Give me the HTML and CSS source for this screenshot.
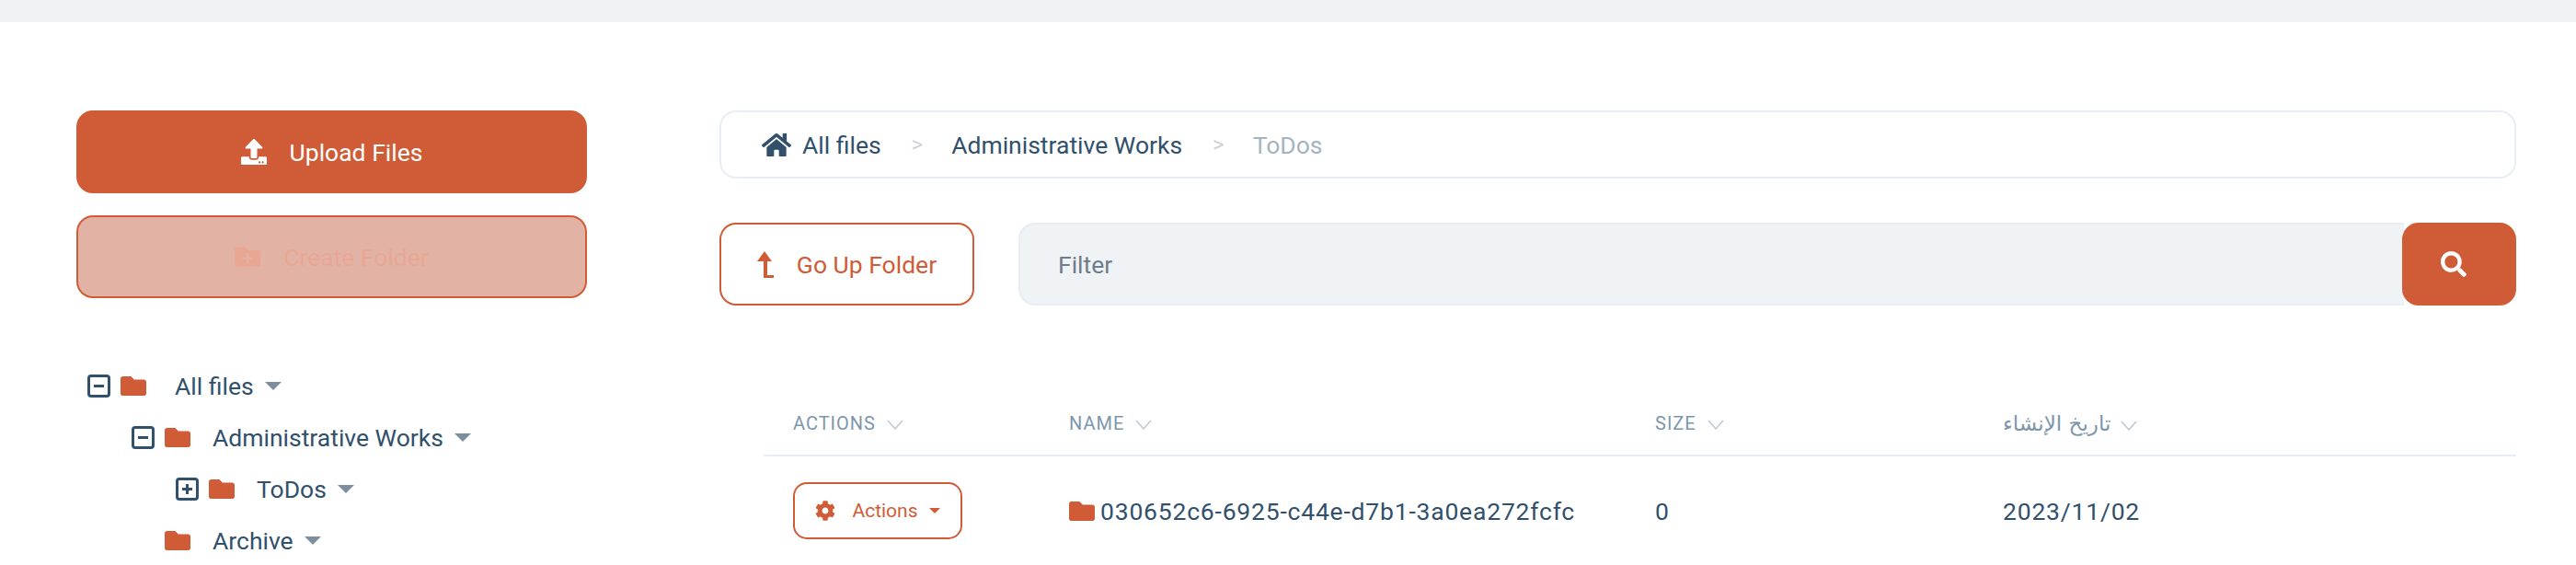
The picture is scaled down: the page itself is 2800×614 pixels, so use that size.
FILE: index.html
```html
<!DOCTYPE html>
<html lang="en">
<head>
  <meta charset="UTF-8" />
  <title>Files</title>
  <link rel="stylesheet" href="styles.css">
</head>
<body>

  <div class="top-bar"></div>

  <div class="page">

    <aside class="sidebar">
      <button class="btn btn-primary btn-block">
        <svg class="icon-upload" viewBox="0 0 512 512"><path d="M296 384h-80c-13.3 0-24-10.7-24-24V192h-87.7c-17.8 0-26.7-21.5-14.1-34.1L242.3 5.7c7.5-7.5 19.8-7.5 27.3 0l152.2 152.2c12.6 12.6 3.7 34.1-14.1 34.1H320v168c0 13.3-10.7 24-24 24zm216-8v112c0 13.3-10.7 24-24 24H24c-13.3 0-24-10.7-24-24V376c0-13.3 10.7-24 24-24h136v8c0 30.9 25.1 56 56 56h80c30.9 0 56-25.1 56-56v-8h136c13.3 0 24 10.7 24 24zm-124 88c0-11-9-20-20-20s-20 9-20 20 9 20 20 20 20-9 20-20zm64 0c0-11-9-20-20-20s-20 9-20 20 9 20 20 20 20-9 20-20z"/></svg>
        Upload Files
      </button>
      <button class="btn btn-disabled btn-block">
        <svg class="icon-upload" viewBox="0 0 512 512"><path d="M464,128H272L208,64H48A48,48,0,0,0,0,112V400a48,48,0,0,0,48,48H464a48,48,0,0,0,48-48V176A48,48,0,0,0,464,128ZM359.5,296a16,16,0,0,1-16,16h-64v64a16,16,0,0,1-16,16h-16a16,16,0,0,1-16-16V312h-64a16,16,0,0,1-16-16V280a16,16,0,0,1,16-16h64V200a16,16,0,0,1,16-16h16a16,16,0,0,1,16,16v64h64a16,16,0,0,1,16,16Z"/></svg>
        Create Folder
      </button>

      <ul class="tree">
        <li>
          <div class="tree-row tree-root">
            <svg class="toggle" viewBox="0 0 25 25"><rect x="1.5" y="1.5" width="22" height="22" rx="2.5"/><path d="M7 12.5h11"/></svg>
            <svg class="folder" viewBox="0 0 512 384"><path d="M464 64H272L208 0H48C21.49 0 0 21.49 0 48v288c0 26.51 21.49 48 48 48h416c26.51 0 48-21.49 48-48V112c0-26.51-21.49-48-48-48z"/></svg>
            <span>All files</span>
            <i class="caret"></i>
          </div>
          <ul>
            <li>
              <div class="tree-row">
                <svg class="toggle" viewBox="0 0 25 25"><rect x="1.5" y="1.5" width="22" height="22" rx="2.5"/><path d="M7 12.5h11"/></svg>
                <svg class="folder" viewBox="0 0 512 384"><path d="M464 64H272L208 0H48C21.49 0 0 21.49 0 48v288c0 26.51 21.49 48 48 48h416c26.51 0 48-21.49 48-48V112c0-26.51-21.49-48-48-48z"/></svg>
                <span>Administrative Works</span>
                <i class="caret"></i>
              </div>
              <ul>
                <li>
                  <div class="tree-row">
                    <svg class="toggle" viewBox="0 0 25 25"><rect x="1.5" y="1.5" width="22" height="22" rx="2.5"/><path d="M7 12.5h11M12.5 7v11"/></svg>
                    <svg class="folder" viewBox="0 0 512 384"><path d="M464 64H272L208 0H48C21.49 0 0 21.49 0 48v288c0 26.51 21.49 48 48 48h416c26.51 0 48-21.49 48-48V112c0-26.51-21.49-48-48-48z"/></svg>
                    <span>ToDos</span>
                    <i class="caret"></i>
                  </div>
                </li>
              </ul>
            </li>
            <li>
              <div class="tree-row">
                <span class="toggle-space"></span>
                <svg class="folder" viewBox="0 0 512 384"><path d="M464 64H272L208 0H48C21.49 0 0 21.49 0 48v288c0 26.51 21.49 48 48 48h416c26.51 0 48-21.49 48-48V112c0-26.51-21.49-48-48-48z"/></svg>
                <span>Archive</span>
                <i class="caret"></i>
              </div>
            </li>
          </ul>
        </li>
      </ul>
    </aside>

    <main class="content">
      <nav class="breadcrumb">
        <svg class="icon-home" viewBox="0 32 576 448"><path d="M280.37 148.26L96 300.11V464a16 16 0 0 0 16 16l112.06-.29a16 16 0 0 0 15.92-16V368a16 16 0 0 1 16-16h64a16 16 0 0 1 16 16v95.64a16 16 0 0 0 16 16.05L464 480a16 16 0 0 0 16-16V300L295.67 148.26a12.19 12.19 0 0 0-15.3 0zM571.6 251.47L488 182.56V44.05a12 12 0 0 0-12-12h-56a12 12 0 0 0-12 12v72.61L318.47 43a48 48 0 0 0-61 0L4.34 251.47a12 12 0 0 0-1.6 16.9l25.5 31A12 12 0 0 0 45.15 301l235.22-193.74a12.19 12.19 0 0 1 15.3 0L530.9 301a12 12 0 0 0 16.9-1.6l25.5-31a12 12 0 0 0-1.7-16.93z"/></svg>
        <span>All files</span>
        <span class="crumb-sep">&gt;</span>
        <span>Administrative Works</span>
        <span class="crumb-sep">&gt;</span>
        <span class="crumb-current">ToDos</span>
      </nav>

      <div class="toolbar">
        <button class="btn btn-outline btn-up">
          <svg class="icon-up" viewBox="0 0 18 29"><path d="M8 0l8 11h-5v15h7v3H7V11H0z"/></svg>
          Go Up Folder
        </button>
        <div class="search">
          <input class="search-input" type="text" placeholder="Filter">
          <button class="btn btn-primary btn-search">
            <svg class="icon-search" viewBox="0 0 512 512"><path d="M505 442.7L405.3 343c-4.5-4.5-10.6-7-17-7H372c27.6-35.3 44-79.7 44-128C416 93.1 322.9 0 208 0S0 93.1 0 208s93.1 208 208 208c48.3 0 92.7-16.4 128-44v16.3c0 6.4 2.5 12.5 7 17l99.7 99.7c9.4 9.4 24.6 9.4 33.9 0l28.3-28.3c9.4-9.4 9.4-24.6.1-34zM208 336c-70.7 0-128-57.2-128-128 0-70.7 57.2-128 128-128 70.7 0 128 57.2 128 128 0 70.7-57.2 128-128 128z"/></svg>
          </button>
        </div>
      </div>

      <table class="files">
        <colgroup>
          <col class="col-actions">
          <col class="col-name">
          <col class="col-size">
          <col>
        </colgroup>
        <thead>
          <tr>
            <th>Actions <svg class="chevron" viewBox="0 0 18 11"><path d="M1 1l8 9 8-9"/></svg></th>
            <th>Name <svg class="chevron" viewBox="0 0 18 11"><path d="M1 1l8 9 8-9"/></svg></th>
            <th>Size <svg class="chevron" viewBox="0 0 18 11"><path d="M1 1l8 9 8-9"/></svg></th>
            <th><span class="th-arabic">تاريخ الإنشاء</span> <svg class="chevron" viewBox="0 0 18 11"><path d="M1 1l8 9 8-9"/></svg></th>
          </tr>
        </thead>
        <tbody>
          <tr>
            <td>
              <button class="btn btn-outline btn-actions">
                <svg class="icon-cog" viewBox="0 0 512 512"><path d="M487.4 315.7l-42.6-24.6c4.3-23.2 4.3-47 0-70.2l42.6-24.6c4.9-2.8 7.1-8.6 5.5-14-11.1-35.6-30-67.8-54.7-94.6-3.8-4.1-10-5.1-14.8-2.3L380.8 110c-17.9-15.4-38.5-27.3-60.8-35.1V25.8c0-5.6-3.9-10.5-9.4-11.7-36.7-8.2-74.3-7.8-109.2 0-5.5 1.2-9.4 6.1-9.4 11.7V75c-22.2 7.9-42.8 19.8-60.8 35.1L88.7 85.5c-4.9-2.8-11-1.9-14.8 2.3-24.7 26.7-43.6 58.9-54.7 94.6-1.7 5.4.6 11.2 5.5 14L67.3 221c-4.3 23.2-4.3 47 0 70.2l-42.6 24.6c-4.9 2.8-7.1 8.6-5.5 14 11.1 35.6 30 67.8 54.7 94.6 3.8 4.1 10 5.1 14.8 2.3l42.6-24.6c17.9 15.4 38.5 27.3 60.8 35.1v49.2c0 5.6 3.9 10.5 9.4 11.7 36.7 8.2 74.3 7.8 109.2 0 5.5-1.2 9.4-6.1 9.4-11.7v-49.2c22.2-7.9 42.8-19.8 60.8-35.1l42.6 24.6c4.9 2.8 11 1.9 14.8-2.3 24.7-26.7 43.6-58.9 54.7-94.6 1.5-5.5-.7-11.3-5.6-14.1zM256 336c-44.1 0-80-35.9-80-80s35.9-80 80-80 80 35.9 80 80-35.9 80-80 80z"/></svg>
                Actions
                <i class="caret caret-small"></i>
              </button>
            </td>
            <td>
              <div class="file-name">
                <svg class="folder" viewBox="0 0 512 384"><path d="M464 64H272L208 0H48C21.49 0 0 21.49 0 48v288c0 26.51 21.49 48 48 48h416c26.51 0 48-21.49 48-48V112c0-26.51-21.49-48-48-48z"/></svg>
                030652c6-6925-c44e-d7b1-3a0ea272fcfc
              </div>
            </td>
            <td>0</td>
            <td>2023/11/02</td>
          </tr>
        </tbody>
      </table>
    </main>

  </div>

</body>
</html>
```

FILE: styles.css
```css
html, body {
  margin: 0;
  height: 100%;
  overflow: hidden;
}

body {
  font-family: Roboto, "Noto Sans", sans-serif;
  font-size: 26.5px;
  color: #31506b;
  background-color: #fff;
}

.top-bar {
  height: 24px;
  background-color: #eff3f6;
}

.page {
  display: flex;
  gap: 144px;
  padding: 96px 65px 0 83px;
}

/* buttons */
.btn {
  display: inline-flex;
  align-items: center;
  justify-content: center;
  font-family: inherit;
  font-size: 26.5px;
  border-radius: 18px;
  border: 2px solid #cf5c36;
  cursor: pointer;
}

.btn-primary {
  background-color: #cf5c36;
  color: #fff;
  fill: #fff;
}

.btn-outline {
  background-color: #fff;
  color: #cf5c36;
  fill: #cf5c36;
}

.btn-disabled {
  background-color: #e2b3a5;
  color: #e9a793;
  fill: #e9a793;
}

.btn-block {
  width: 100%;
  height: 90px;
  gap: 25px;
}

.btn-block + .btn-block {
  margin-top: 24px;
}

.icon-upload {
  width: 28px;
  height: 28px;
}

/* sidebar */
.sidebar {
  width: 555px;
  flex-shrink: 0;
}

.tree, .tree ul {
  list-style: none;
  margin: 0;
  padding: 0;
}

.tree {
  margin-top: 67px;
  padding-left: 12px;
}

.tree ul {
  padding-left: 48px;
}

.tree-row {
  display: flex;
  align-items: center;
  height: 56px;
}

.toggle {
  width: 25px;
  height: 25px;
  fill: none;
  stroke: #31506b;
  stroke-width: 3;
}

.toggle-space {
  width: 25px;
}

.folder {
  width: 28px;
  height: 21px;
  fill: #cf5c36;
  flex-shrink: 0;
}

.tree-row .folder {
  margin: 0 24px 0 11px;
}

.tree-root .folder {
  margin-right: 31px;
}

.caret {
  display: inline-block;
  width: 0;
  height: 0;
  margin-left: 12px;
  border-left: 9px solid transparent;
  border-right: 9px solid transparent;
  border-top: 9px solid #7d8f9e;
}

/* main column */
.content {
  flex: 1;
  min-width: 0;
}

.breadcrumb {
  display: flex;
  align-items: center;
  height: 74px;
  box-sizing: border-box;
  padding: 0 44px;
  border: 2px solid #e9edf4;
  border-radius: 18px;
}

.icon-home {
  width: 32px;
  height: 25px;
  fill: #31506b;
  margin-right: 12px;
}

.crumb-sep {
  font-size: 24px;
  color: #cfd3d8;
  margin: 0 31px 0 33px;
}

.crumb-current {
  color: #a5b4c2;
}

.toolbar {
  display: flex;
  gap: 48px;
  margin-top: 48px;
}

.btn-up {
  width: 277px;
  height: 90px;
  gap: 25px;
  flex-shrink: 0;
}

.icon-up {
  width: 18px;
  height: 29px;
}

.search {
  flex: 1;
  display: flex;
}

.search-input {
  flex: 1;
  min-width: 0;
  height: 90px;
  box-sizing: border-box;
  padding: 0 41px;
  font-family: inherit;
  font-size: 26.5px;
  background-color: #eff3f6;
  border: 2px solid #e9edf4;
  border-right: none;
  border-radius: 18px 0 0 18px;
  outline: none;
}

.search-input::placeholder {
  color: #6f7d8a;
  opacity: 1;
}

.btn-search {
  width: 124px;
  height: 90px;
  margin-left: -2px;
  padding: 0 12px 0 0;
}

.icon-search {
  width: 28px;
  height: 28px;
}

/* table */
.files {
  width: 1905px;
  margin: 94px 0 0 48px;
  border-collapse: collapse;
  table-layout: fixed;
}

.col-actions {
  width: 300px;
}

.col-name {
  width: 637px;
}

.col-size {
  width: 378px;
}

.files th {
  height: 68px;
  padding: 0 0 0 32px;
  text-align: left;
  font-size: 20px;
  font-weight: 400;
  letter-spacing: 1px;
  text-transform: uppercase;
  color: #7d96ac;
  border-bottom: 2px solid #e9edf4;
}

.th-arabic {
  font-family: "DejaVu Sans", sans-serif;
  font-size: 23px;
  font-weight: 400;
  letter-spacing: 0;
}

.chevron {
  width: 18px;
  height: 11px;
  margin-left: 6px;
  fill: none;
  stroke: #bcc8d3;
  stroke-width: 1.5;
}

.files td {
  height: 118px;
  padding: 0 0 0 32px;
  letter-spacing: 0.8px;
}

.btn-actions {
  width: 184px;
  height: 62px;
  gap: 18px;
  font-size: 21px;
  letter-spacing: 0;
  border-radius: 15px;
}

.icon-cog {
  width: 22px;
  height: 22px;
}

.caret-small {
  margin-left: -6px;
  border-left-width: 6px;
  border-right-width: 6px;
  border-top: 6px solid #cf5c36;
}

.file-name {
  display: flex;
  align-items: center;
  gap: 6px;
}
```
